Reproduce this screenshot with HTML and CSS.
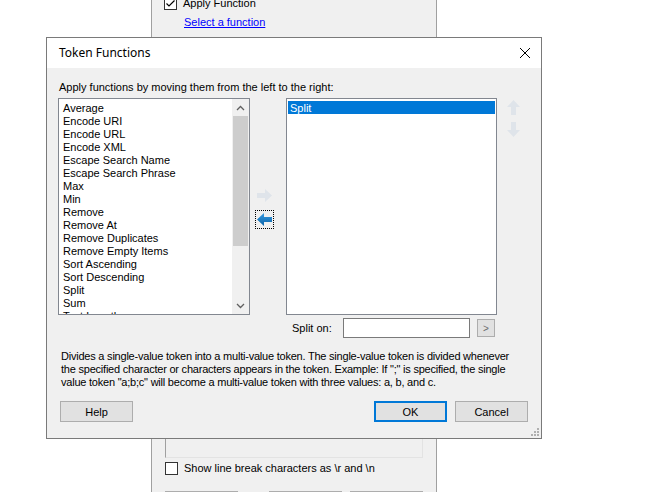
FILE: index.html
```html
<!DOCTYPE html>
<html>
<head>
<meta charset="utf-8">
<link rel="stylesheet" href="styles.css">
</head>
<body>
<div class="desk">
  <div class="bgwin">
    <div class="bg-top">
      <div class="chkrow">
        <span class="chk checked"><svg viewBox="0 0 13 13" width="13" height="13"><path d="M2.5 6.5 L5 9 L10.5 3.5" fill="none" stroke="#000" stroke-width="1.2"/></svg></span>
        <span class="chklabel">Apply Function</span>
      </div>
      <a class="link" href="#">Select a function</a>
    </div>
    <div class="bg-bottom">
      <div class="bg-textbox"></div>
      <div class="chkrow chkrow2">
        <span class="chk"></span>
        <span class="chklabel">Show line break characters as \r and \n</span>
      </div>
      <div class="bg-buttons">
        <span class="bgbtn b1"></span>
        <span class="bgbtn b2"></span>
        <span class="bgbtn b3"></span>
      </div>
    </div>
  </div>

  <div class="dlg">
    <div class="titlebar">
      <span class="title">Token Functions</span>
      <svg class="close" viewBox="0 0 12 12" width="12" height="12"><path d="M1 1 L11 11 M11 1 L1 11" stroke="#000" stroke-width="1" fill="none"/></svg>
    </div>
    <div class="dlg-body">
      <div class="lead">Apply functions by moving them from the left to the right:</div>
      <div class="main">
        <div class="list list-left">
          <div class="items">
            <div class="item">Average</div>
            <div class="item">Encode URI</div>
            <div class="item">Encode URL</div>
            <div class="item">Encode XML</div>
            <div class="item">Escape Search Name</div>
            <div class="item">Escape Search Phrase</div>
            <div class="item">Max</div>
            <div class="item">Min</div>
            <div class="item">Remove</div>
            <div class="item">Remove At</div>
            <div class="item">Remove Duplicates</div>
            <div class="item">Remove Empty Items</div>
            <div class="item">Sort Ascending</div>
            <div class="item">Sort Descending</div>
            <div class="item">Split</div>
            <div class="item">Sum</div>
            <div class="item">Text Length</div>
          </div>
          <div class="scrollbar">
            <div class="sb-btn"><svg viewBox="0 0 9 6" width="9" height="6"><path d="M1 5 L4.5 1.5 L8 5" fill="none" stroke="#606060" stroke-width="1.3"/></svg></div>
            <div class="sb-thumb"></div>
            <div class="sb-track"></div>
            <div class="sb-btn"><svg viewBox="0 0 9 6" width="9" height="6"><path d="M1 1 L4.5 4.5 L8 1" fill="none" stroke="#606060" stroke-width="1.3"/></svg></div>
          </div>
        </div>
        <div class="mid">
          <div class="arrowbtn"><svg viewBox="0 0 17 17" width="17" height="17"><path d="M1 6 H9 V2 L16 8.5 L9 15 V11 H1 Z" fill="#dfe4ea"/></svg></div>
          <div class="arrowbtn focus"><svg viewBox="0 0 17 17" width="17" height="17"><defs><linearGradient id="bl" x1="0" y1="0" x2="0" y2="1"><stop offset="0" stop-color="#3a9be0"/><stop offset="1" stop-color="#0a63a8"/></linearGradient></defs><path d="M16 6 H8 V2 L1 8.5 L8 15 V11 H16 Z" fill="url(#bl)"/></svg></div>
        </div>
        <div class="list list-right">
          <div class="item sel">Split</div>
        </div>
        <div class="updown">
          <svg viewBox="0 0 17 17" width="17" height="17"><path d="M6 16 V8 H2 L8.5 1 L15 8 H11 V16 Z" fill="#dfe4ea"/></svg>
          <svg viewBox="0 0 17 17" width="17" height="17"><path d="M6 1 V9 H2 L8.5 16 L15 9 H11 V1 Z" fill="#dfe4ea"/></svg>
        </div>
      </div>
      <div class="splitrow">
        <span class="splitlabel">Split on:</span>
        <span class="textbox"></span>
        <span class="smallbtn">&gt;</span>
      </div>
      <div class="desc">Divides a single-value token into a multi-value token. The single-value token is divided whenever<br>the specified character or characters appears in the token. Example: If ";" is specified, the single<br>value token "a;b;c" will become a multi-value token with three values: a, b, and c.</div>
      <div class="buttons">
        <span class="btn help">Help</span>
        <span class="btn ok">OK</span>
        <span class="btn cancel">Cancel</span>
      </div>
      <svg class="grip" viewBox="0 0 8 8" width="8" height="8">
        <rect x="6" y="0" width="2" height="2" fill="#b0b0b0"/>
        <rect x="3" y="3" width="2" height="2" fill="#b0b0b0"/>
        <rect x="6" y="3" width="2" height="2" fill="#b0b0b0"/>
        <rect x="0" y="6" width="2" height="2" fill="#b0b0b0"/>
        <rect x="3" y="6" width="2" height="2" fill="#b0b0b0"/>
        <rect x="6" y="6" width="2" height="2" fill="#b0b0b0"/>
      </svg>
    </div>
  </div>
</div>
</body>
</html>
```
FILE: styles.css
```css
html, body {
  margin: 0;
  padding: 0;
  background: #ffffff;
}
body {
  font-family: "Liberation Sans", Arial, sans-serif;
  font-size: 11px;
  color: #000;
}
.desk {
  position: relative;
  width: 652px;
  height: 492px;
  overflow: hidden;
  background: #ffffff;
}

/* background window */
.bgwin {
  position: absolute;
  left: 151px;
  top: -3px;
  width: 286px;
  height: 520px;
  box-sizing: border-box;
  background: #f0f0f0;
  border-left: 1px solid #a0a0a0;
  border-right: 1px solid #a0a0a0;
  display: flex;
  flex-direction: column;
}
.bg-top {
  padding-left: 12px;
  display: flex;
  flex-direction: column;
}
.chkrow {
  display: flex;
  align-items: center;
  height: 13px;
}
.chk {
  width: 13px;
  height: 13px;
  box-sizing: border-box;
  border: 1px solid #333;
  background: #fff;
  display: inline-block;
}
.chk svg {
  display: block;
  margin: -1px;
}
.chklabel {
  margin-left: 6px;
  font-size: 11px;
  line-height: 13px;
}
.link {
  margin-top: 6px;
  margin-left: 20px;
  color: #0000ff;
  text-decoration: underline;
  line-height: 13px;
  align-self: flex-start;
}
.bg-bottom {
  margin-top: auto;
  padding-left: 13px;
  display: flex;
  flex-direction: column;
}
.bg-textbox {
  width: 258px;
  height: 19px;
  box-sizing: border-box;
  border-left: 1px solid #a0a0a0;
  border-bottom: 1px solid #e3e3e3;
  border-right: 1px solid #e3e3e3;
  background: #f0f0f0;
}
.chkrow2 {
  margin-top: 4px;
}
.bg-buttons {
  margin-top: 16px;
  display: flex;
  height: 26px;
}
.bgbtn {
  height: 23px;
  box-sizing: border-box;
  border: 1px solid #adadad;
  background: #e1e1e1;
  width: 73px;
}
.b2 { margin-left: 31px; }
.b3 { margin-left: 8px; }

/* dialog */
.dlg {
  position: absolute;
  left: 46px;
  top: 37px;
  width: 496px;
  height: 402px;
  box-sizing: border-box;
  border: 1px solid #7a7a7a;
  background: #f0f0f0;
  display: flex;
  flex-direction: column;
}
.titlebar {
  height: 30px;
  background: #ffffff;
  display: flex;
  align-items: center;
  padding-left: 12px;
  padding-right: 10px;
}
.title {
  font-family: "Noto Sans", "Open Sans", sans-serif;
  font-size: 12px;
  flex: 1;
  margin-top: -1px;
}
.close {
  display: block;
}
.dlg-body {
  flex: 1;
  position: relative;
  padding: 13px 0 0 11px;
}
.lead {
  margin-left: 1px;
  line-height: 13px;
}
.main {
  display: flex;
  margin-top: 4px;
  height: 217px;
}
.list {
  box-sizing: border-box;
  border: 1px solid #828790;
  background: #fff;
  height: 217px;
}
.list-left {
  width: 192px;
  display: flex;
  overflow: hidden;
}
.items {
  flex: 1;
  padding: 3px 0 0 4px;
  overflow: hidden;
}
.item {
  line-height: 13px;
  height: 13px;
  white-space: nowrap;
}
.scrollbar {
  width: 17px;
  background: #f0f0f0;
  display: flex;
  flex-direction: column;
}
.sb-btn {
  height: 17px;
  display: flex;
  align-items: center;
  justify-content: center;
}
.sb-thumb {
  height: 130px;
  margin: 0 1px;
  background: #cdcdcd;
}
.sb-track {
  flex: 1;
}
.mid {
  width: 36px;
  padding-top: 88px;
  box-sizing: border-box;
  display: flex;
  flex-direction: column;
  align-items: flex-start;
  padding-left: 5px;
}
.arrowbtn {
  width: 19px;
  height: 19px;
  box-sizing: border-box;
  display: flex;
  align-items: center;
  justify-content: center;
  border: 1px solid transparent;
}
.arrowbtn.focus {
  margin-top: 5px;
  border: 1px dotted #000;
}
.list-right {
  width: 211px;
  padding: 2px 1px;
}
.item.sel {
  background: #0078d7;
  color: #fff;
  padding-left: 2px;
  line-height: 14px;
}
.updown {
  margin-left: 8px;
  display: flex;
  flex-direction: column;
  gap: 5px;
  padding-top: 1px;
}
.updown svg { display: block; }
.splitrow {
  display: flex;
  align-items: center;
  margin-top: 3px;
  height: 20px;
}
.splitlabel {
  margin-left: 234px;
  width: 51px;
  margin-top: -1px;
}
.textbox {
  width: 127px;
  height: 20px;
  box-sizing: border-box;
  border: 1px solid #7a7a7a;
  background: #fff;
}
.smallbtn {
  margin-left: 7px;
  width: 18px;
  height: 18px;
  box-sizing: border-box;
  border: 1px solid #adadad;
  background: #e1e1e1;
  color: #6d6d6d;
  font-size: 10px;
  display: flex;
  align-items: center;
  justify-content: center;
}
.desc {
  margin-top: 12px;
  margin-left: 3px;
  line-height: 13px;
  white-space: nowrap;
  letter-spacing: -0.22px;
}
.buttons {
  margin-top: 12px;
  display: flex;
  margin-left: 2px;
}
.btn {
  width: 73px;
  height: 21px;
  box-sizing: border-box;
  border: 1px solid #adadad;
  background: #e1e1e1;
  display: flex;
  align-items: center;
  justify-content: center;
}
.ok {
  margin-left: 241px;
  border: 1px solid #0078d7;
  box-shadow: inset 0 0 0 1px #0078d7;
}
.cancel {
  margin-left: 8px;
}
.grip {
  position: absolute;
  right: 2px;
  bottom: 2px;
  display: block;
}
```
